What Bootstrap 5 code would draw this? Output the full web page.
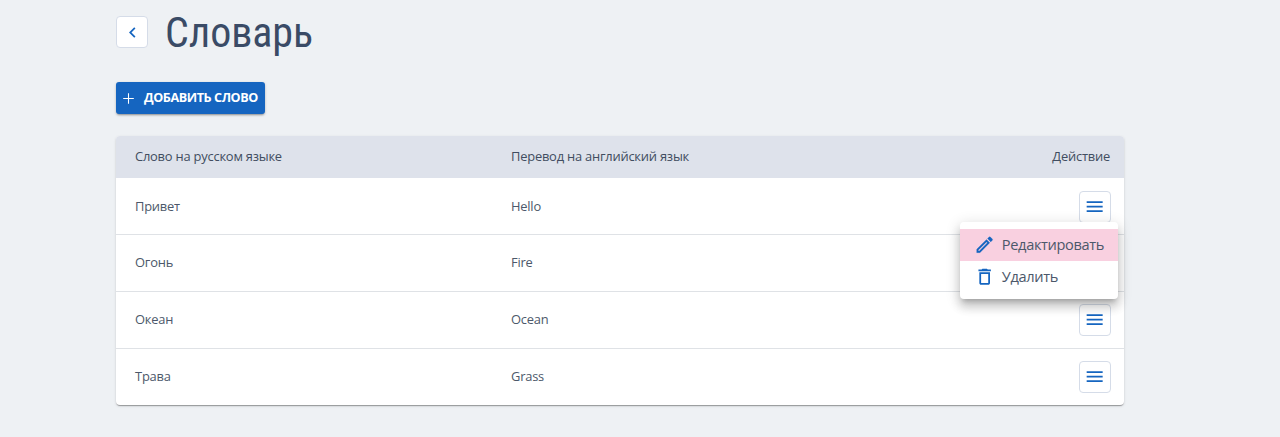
<!DOCTYPE html>
<html lang="ru">
<head>
<meta charset="utf-8">
<meta name="viewport" content="width=device-width, initial-scale=1">
<title>Словарь</title>
<link href="https://cdn.jsdelivr.net/npm/bootstrap@5.3.0/dist/css/bootstrap.min.css" rel="stylesheet">
<style>
body{background:#eef1f4;font-family:"Open Sans","Noto Sans",sans-serif;font-size:12.9px;letter-spacing:-.21px;color:#4c586a}
.page{width:1008px;margin-left:116px;padding:16px 0 24px}
.title{font-family:"Roboto Condensed",Roboto,sans-serif;font-size:42px;line-height:50px;font-weight:400;font-stretch:75%;letter-spacing:-.05px;color:#3a4b66;margin:-8px 0 0 17px;white-space:nowrap}
.square{width:32px;height:32px;padding:0;border:1px solid #d5dce8;border-radius:4px;background:#fff;color:#1565c0}
.btn.square:hover{background:#fff;color:#1565c0;border-color:#d5dce8}
.line .square{margin-right:-.5px}
.add{width:149px;height:32px;margin-top:34px;padding:0 0 0 4px;gap:7px;border:0;border-radius:3px;background:#1565c0;color:#fff;font-size:12.6px;font-weight:700;letter-spacing:-.42px;line-height:1;white-space:nowrap;box-shadow:0 2px 2px -1px #0004,0 1px 3px #0003}
.words{margin-top:22px;border-radius:4px;background:#fff;box-shadow:0 2px 1px -1px #0003,0 1px 1px #00000024,0 1px 3px #0000001f}
.line{height:57px;border-top:1px solid #dfe2e6;padding:0 14px 0 19px}
.line.head{height:42px;border:0;border-radius:4px 4px 0 0;background:#dee2eb;color:#414d60}
.line.head + .line{height:56px;border-top:0;padding-top:1px}
.first{width:376px}
.actions{top:44px;right:6px;left:auto;width:158px;height:77px;min-width:0;padding:7px 0;border:0;border-radius:4px;background:#fff;box-shadow:0 5px 5px -3px #0003,0 8px 10px 1px #00000024,0 3px 14px 2px #0000001f;z-index:5}
.actions .dropdown-item{height:31.5px;padding:0 0 0 13.5px;gap:7px;font-size:14.6px;letter-spacing:-.35px;line-height:1;color:#4c586a}
.actions .dropdown-item.picked{background:#f9d0e0}
.actions svg{color:#1565c0}
svg{fill:currentColor;flex:none;display:block}
</style>
</head>
<body>
<svg width="0" height="0" class="position-absolute">
<symbol id="menu" viewBox="0 0 24 24"><path d="M3 18h18v-2H3v2zm0-5h18v-2H3v2zm0-7v2h18V6H3z"/></symbol>
<symbol id="edit" viewBox="0 0 24 24"><path d="M14.06 9.02l.92.92L5.92 19H5v-.92l9.06-9.06M17.66 3c-.25 0-.51.1-.7.29l-1.83 1.83 3.75 3.75 1.83-1.83c.39-.39.39-1.02 0-1.41l-2.34-2.34c-.2-.2-.45-.29-.71-.29zm-3.6 3.19L3 17.25V21h3.75L17.81 9.94l-3.75-3.75z" stroke="currentColor" stroke-width=".2"/></symbol>
<symbol id="trash" viewBox="0 0 24 24"><path d="M16 9v10H8V9h8m-1.500-6h-5l-1 1H5v2h14V4h-3.500l-1-1zM18 7H6v12c0 1.100.9 2 2 2h8c1.100 0 2-.9 2-2V7z"/></symbol>
<symbol id="back" viewBox="0 0 24 24"><path d="M15.410 7.410L14 6l-6 6 6 6 1.410-1.410L10.830 12z"/></symbol>
<symbol id="plus" viewBox="0 0 24 24"><path d="M19.500 12.750h-6.750v6.750h-1.500v-6.750H4.500v-1.500h6.750V4.500h1.500v6.750h6.750z"/></symbol>
</svg>
<main class="page">
<header class="d-flex" style="height:32px">
<button class="btn square d-flex align-items-center justify-content-center" aria-label="Назад"><svg width="21" height="21"><use href="#back"/></svg></button>
<h1 class="title">Словарь</h1>
</header>
<button class="btn add d-flex align-items-center"><svg width="17" height="17"><use href="#plus"/></svg><span>ДОБАВИТЬ СЛОВО</span></button>
<section class="words">
<div class="line head d-flex align-items-center"><span class="first">Слово на русском языке</span><span class="flex-grow-1">Перевод на английский язык</span><span>Действие</span></div>
<div class="line d-flex align-items-center position-relative"><span class="first">Привет</span><span class="flex-grow-1">Hello</span>
<button class="btn square d-flex align-items-center justify-content-center" aria-label="Действия"><svg width="21.33" height="21.33"><use href="#menu"/></svg></button>
<div class="dropdown-menu actions d-block">
<a class="dropdown-item picked d-flex align-items-center"><svg width="21.33" height="21.33"><use href="#edit"/></svg><span>Редактировать</span></a>
<a class="dropdown-item d-flex align-items-center"><svg width="21.33" height="21.33"><use href="#trash"/></svg><span>Удалить</span></a>
</div></div>
<div class="line d-flex align-items-center"><span class="first">Огонь</span><span class="flex-grow-1">Fire</span>
<button class="btn square d-flex align-items-center justify-content-center" aria-label="Действия"><svg width="21.33" height="21.33"><use href="#menu"/></svg></button></div>
<div class="line d-flex align-items-center"><span class="first">Океан</span><span class="flex-grow-1">Ocean</span>
<button class="btn square d-flex align-items-center justify-content-center" aria-label="Действия"><svg width="21.33" height="21.33"><use href="#menu"/></svg></button></div>
<div class="line d-flex align-items-center"><span class="first">Трава</span><span class="flex-grow-1">Grass</span>
<button class="btn square d-flex align-items-center justify-content-center" aria-label="Действия"><svg width="21.33" height="21.33"><use href="#menu"/></svg></button></div>
</section>
</main>
<script src="https://cdn.jsdelivr.net/npm/bootstrap@5.3.0/dist/js/bootstrap.bundle.min.js"></script>
</body>
</html>
